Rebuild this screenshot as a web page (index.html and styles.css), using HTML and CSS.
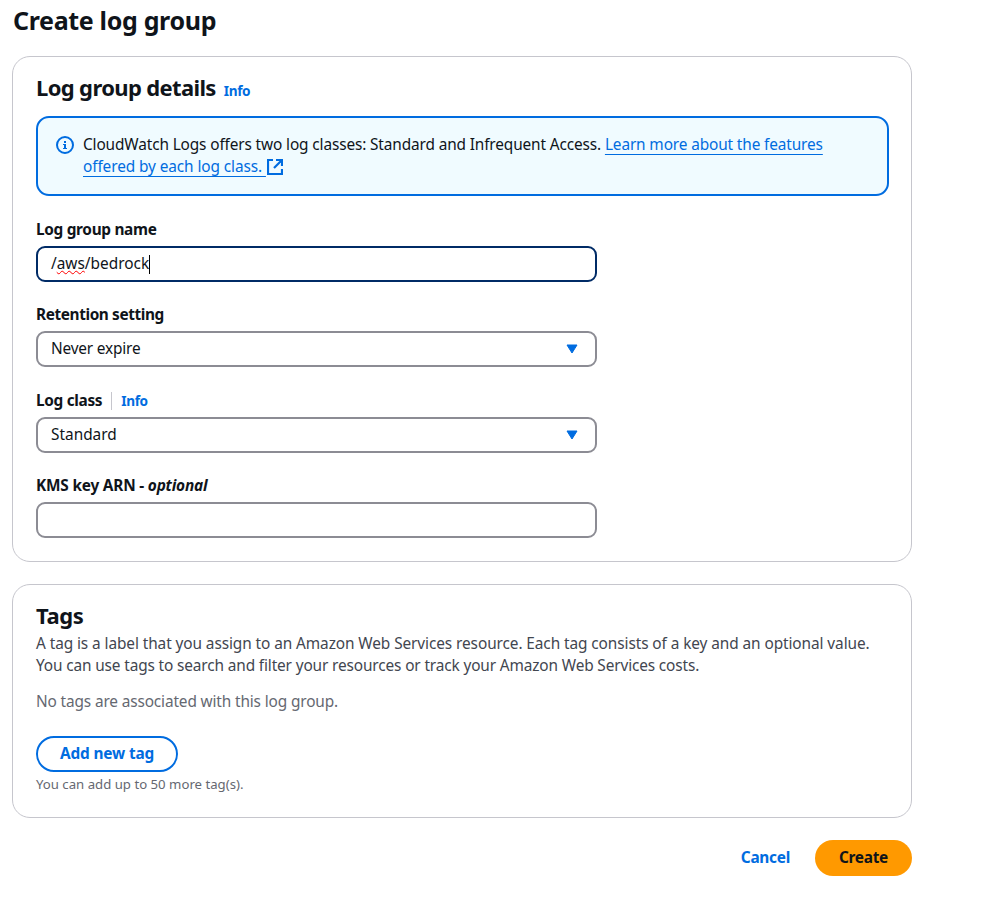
FILE: index.html
```html
<!DOCTYPE html>
<html lang="en">
<head>
<meta charset="utf-8">
<title>Create log group</title>
<link rel="stylesheet" href="styles.css">
</head>
<body>
<main class="page">
  <h1 class="page-title">Create log group</h1>
  <section class="card details">
    <header class="card-header"><h2 class="heading">Log group details</h2><a class="info">Info</a></header>
    <div class="alert">
      <svg class="alert-icon" viewBox="0 0 18 18"><circle cx="9" cy="9" r="8" fill="none" stroke="currentColor" stroke-width="2"/><path d="M8 5h2v2H8zM7 8h3v4h1v1H7v-1h1V9H7z" fill="currentColor"/></svg>
      <p class="alert-text">CloudWatch Logs offers two log classes: Standard and Infrequent Access. <a class="link">Learn more about the features<br><span class="link-end">offered by each log class.&nbsp;</span></a><svg class="external" viewBox="0 0 16 16"><path d="M6 1H1v14h14v-5M9 1h6v6M15 1L7 9" fill="none" stroke="currentColor" stroke-width="2.2"/></svg></p>
    </div>
    <div class="field"><label class="label">Log group name</label><div class="control input focused">/<span class="misspelled">aws</span>/bedrock<i class="caret"></i></div></div>
    <div class="field"><label class="label retention">Retention setting</label><div class="control select">Never expire<svg class="arrow" viewBox="0 0 12 10"><path d="M1 1h10L6 9z"/></svg></div></div>
    <div class="field with-info"><label class="label">Log class<i class="divider"></i><a class="info">Info</a></label><div class="control">Standard<svg class="arrow" viewBox="0 0 12 10"><path d="M1 1h10L6 9z"/></svg></div></div>
    <div class="field"><label class="label kms"><span>KMS key ARN - <em>optional</em></span></label><div class="control"></div></div>
  </section>
  <section class="card tags">
    <h2 class="heading">Tags</h2>
    <p class="description">A tag is a label that you assign to an Amazon Web Services resource. Each tag consists of a key and an optional value.<br><span class="search-note">You can use tags to search and filter your resources or track your Amazon Web Services costs.</span></p>
    <p class="empty">No tags are associated with this log group.</p>
    <button class="button outline">Add new tag</button>
    <p class="hint">You can add up to 50 more tag(s).</p>
  </section>
  <footer class="actions"><button class="button text">Cancel</button><button class="button primary">Create</button></footer>
</main>
</body>
</html>
```
FILE: styles.css
```css
* { box-sizing: border-box; }
body { margin: 0; background: #fff; color: #0f141a; font: 15.4px/22px "Noto Sans", sans-serif; }
h1, h2, p { margin: 0; }
.page { width: 900px; margin-left: 12px; }
.page-title { height: 56px; padding: 5px 0 0 1px; font-size: 25px; line-height: 30px; letter-spacing: -0.33px; }
.card { border: 1px solid #c6c6cd; border-radius: 18px; padding: 0 22px 0 23px; }
.details { height: 506px; padding-top: 16px; }
.card-header { display: flex; align-items: baseline; gap: 8px; height: 43px; }
.heading { font-size: 22px; line-height: 28px; letter-spacing: -0.64px; }
.info { color: #006ce0; font-size: 13.6px; font-weight: 700; letter-spacing: -0.35px; }
.alert { display: flex; height: 80px; border: 2px solid #006ce0; border-radius: 13px; background: #f0fbff; padding: 16px 18px; }
.alert-icon { width: 18px; height: 18px; margin: 2px 9px 0 0; color: #006ce0; flex: none; }
.alert-text { white-space: nowrap; letter-spacing: -0.13px; }
.link { color: #006ce0; text-decoration: underline; text-decoration-thickness: 1px; text-underline-offset: 4px; }
.link-end { letter-spacing: -0.1px; }
.external { width: 16px; height: 16px; margin-left: 1px; color: #006ce0; vertical-align: -3px; }
.field { width: 561px; margin-top: 23px; }
.field + .field { margin-top: 22px; }
.field + .with-info { margin-top: 23px; }
.label { display: flex; align-items: center; height: 22px; margin-bottom: 5px; font-weight: 700; letter-spacing: -0.32px; }
.retention { letter-spacing: -0.4px; }
.kms { letter-spacing: -0.2px; }
.control { display: flex; align-items: center; height: 36px; border: 2px solid #8c8c94; border-radius: 9px; padding: 0 17px 0 13px; }
.select { letter-spacing: -0.18px; }
.focused { border-color: #002b66; }
.misspelled { text-decoration: underline wavy #f00 1px; }
.caret { width: 1px; height: 19px; background: #000; }
.arrow { width: 12px; height: 10px; margin-left: auto; fill: #006ce0; stroke: #006ce0; stroke-linejoin: round; }
.divider { width: 1px; height: 18px; margin: 0 9px; background: #c6c6cd; }
.tags { height: 234px; margin-top: 22px; padding-top: 16px; }
.tags .heading { letter-spacing: -0.45px; }
.description { margin-top: 4px; color: #424650; letter-spacing: -0.088px; }
.search-note { letter-spacing: -0.135px; }
.empty { margin-top: 14px; color: #656871; letter-spacing: -0.14px; }
.button { height: 36px; border: 2px solid transparent; border-radius: 18px; padding: 0 22px; background: none; font: inherit; font-weight: 700; letter-spacing: -0.28px; color: #006ce0; }
.outline { display: block; margin-top: 23px; border-color: #006ce0; letter-spacing: -0.15px; }
.hint { margin-top: 3px; color: #656871; font-size: 13.2px; line-height: 18px; }
.actions { display: flex; justify-content: flex-end; gap: 1px; margin-top: 22px; }
.primary { background: #f90; color: #0f141a; }
```
